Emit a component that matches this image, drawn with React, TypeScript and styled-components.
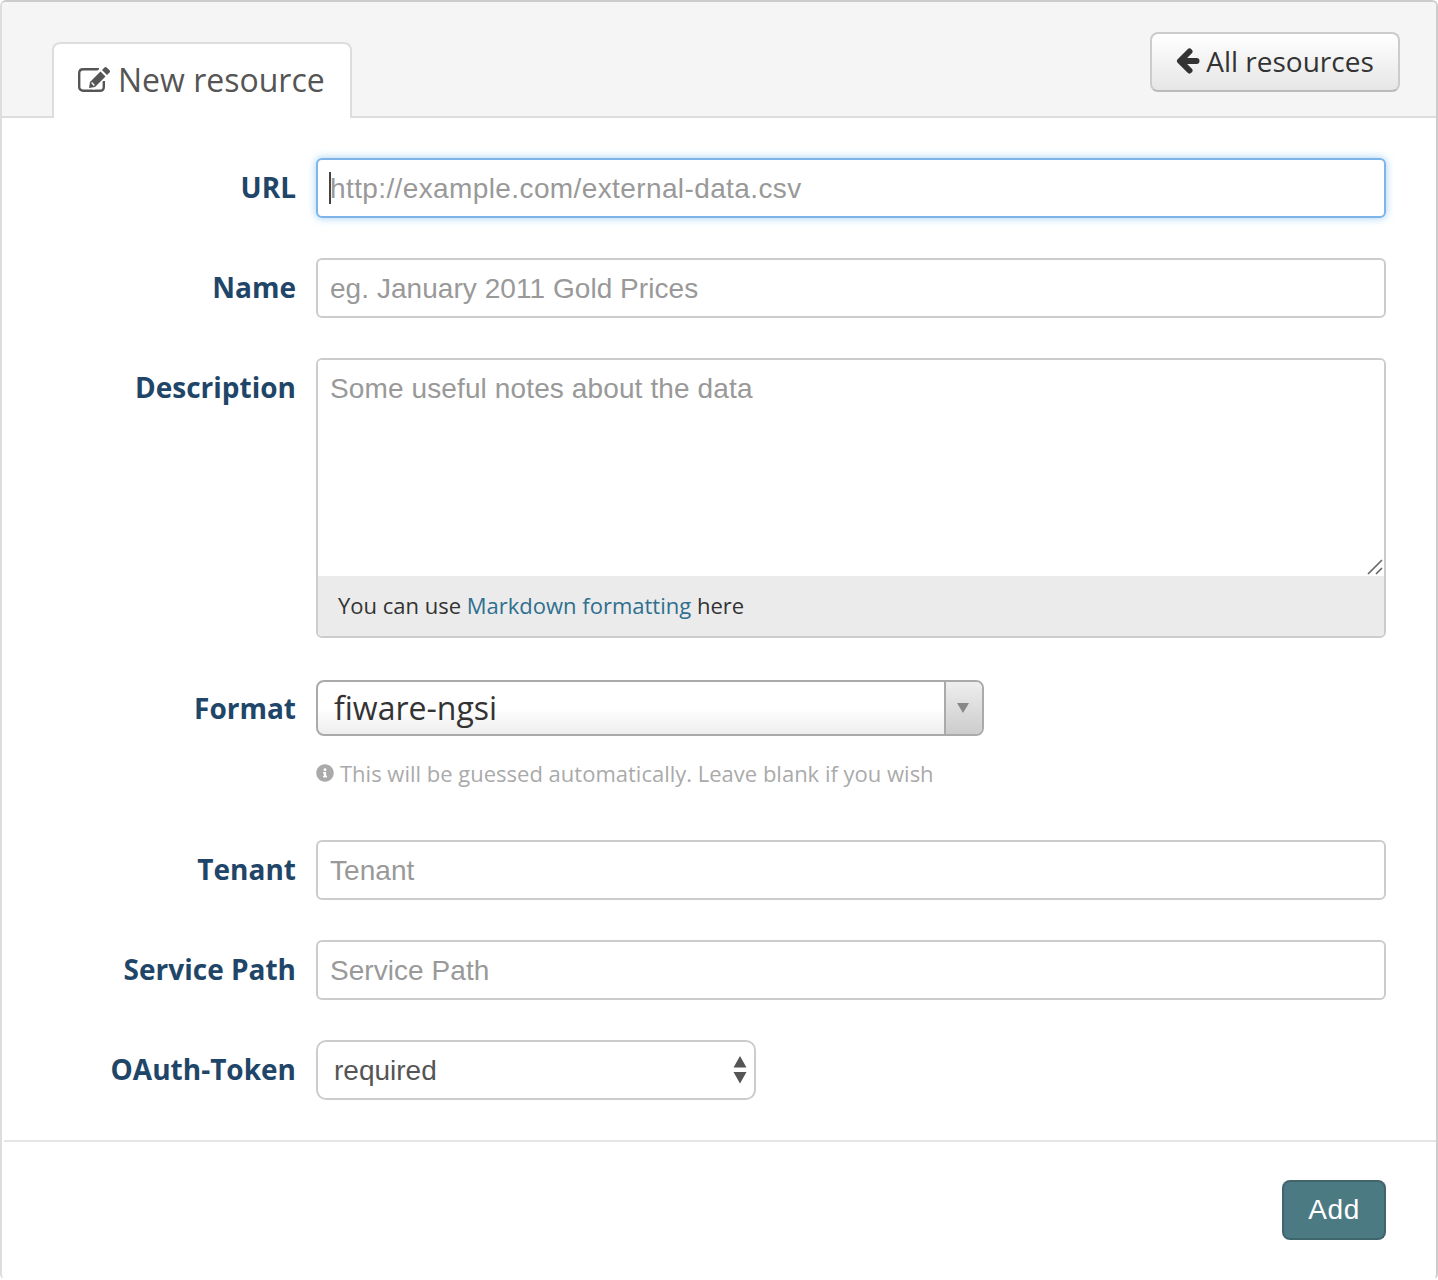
import { createGlobalStyle } from "styled-components";
import styled from "styled-components";
import { FaInfoCircle } from "react-icons/fa";

const GlobalStyle = createGlobalStyle`
  html, body {
    margin: 0;
    padding: 0;
    background: #fff;
  }
  * {
    box-sizing: border-box;
  }
`;

const EditIcon = () => (
  <svg width="32" height="26" viewBox="0 0 32 26" fill="none">
    <path
      d="M25.8 15V21C25.8 23.4 24 24.8 21.8 24.8H5.2C2.8 24.8 1.2 23.2 1.2 21V7.2C1.2 4.8 2.8 3.2 5.2 3.2H21"
      stroke="#555"
      strokeWidth="2.4"
    />
    <path d="M12 20 30 2" stroke="#fff" strokeWidth="11" />
    <path d="M12 16 22.5 5.5 27.5 10.5 17 21 11 22z" fill="#555" />
    <path d="M24 4 26.5 1.5C27.2.8 28 .8 28.7 1.5L31.5 4.3C32.2 5 32.2 5.8 31.5 6.5L29 9z" fill="#555" />
    <path d="M13.6 16.6 16.4 19.4" stroke="#fff" strokeWidth="1.4" />
  </svg>
);

const BackArrow = () => (
  <svg width="24" height="26" viewBox="0 0 24 26" fill="none">
    <path
      d="M13.5 3.5 4 13 13.5 22.5M4.5 13H20.5"
      stroke="#333"
      strokeWidth="6"
      strokeLinecap="round"
      strokeLinejoin="round"
    />
  </svg>
);

const FormField = ({ label, children }: { label: string; children: React.ReactNode }) => (
  <Row>
    <Label>{label}</Label>
    <Control>{children}</Control>
  </Row>
);

export default function App() {
  return (
    <>
      <GlobalStyle />
      <Panel>
        <Header>
          <Tab>
            <EditIcon />
            New resource
          </Tab>
          <BackButton>
            <BackArrow />
            All resources
          </BackButton>
        </Header>
        <Form>
          <FormField label="URL">
            <UrlWrap>
              <TextInput $focused placeholder="http://example.com/external-data.csv" />
              <Caret />
            </UrlWrap>
          </FormField>
          <FormField label="Name">
            <TextInput placeholder="eg. January 2011 Gold Prices" />
          </FormField>
          <FormField label="Description">
            <MarkdownBox>
              <TextArea placeholder="Some useful notes about the data" />
              <ResizeGrip width="16" height="16" viewBox="0 0 16 16">
                <path d="M1 15 15 1M9 15 15 9" stroke="#666" strokeWidth="1.6" />
              </ResizeGrip>
              <Editor>
                You can use <EditorLink href="#">Markdown formatting</EditorLink> here
              </Editor>
            </MarkdownBox>
          </FormField>
          <FormatRow>
            <FormatLabel>Format</FormatLabel>
            <Control>
              <Combo>
                <ComboValue>fiware-ngsi</ComboValue>
                <ComboArrow>
                  <svg width="12" height="10" viewBox="0 0 12 10">
                    <path d="M0 0h12L6 10z" fill="#888" />
                  </svg>
                </ComboArrow>
              </Combo>
              <Hint>
                <FaInfoCircle size={18} />
                This will be guessed automatically. Leave blank if you wish
              </Hint>
            </Control>
          </FormatRow>
          <FormField label="Tenant">
            <TextInput placeholder="Tenant" />
          </FormField>
          <FormField label="Service Path">
            <TextInput placeholder="Service Path" />
          </FormField>
          <FormField label="OAuth-Token">
            <SelectWrap>
              <Select defaultValue="required">
                <option value="required">required</option>
                <option value="optional">optional</option>
              </Select>
              <SelectArrows width="14" height="28" viewBox="0 0 14 28">
                <path d="M7 0l6.5 11.5H.5z" fill="#555" />
                <path d="M.5 16h13L7 27.5z" fill="#555" />
              </SelectArrows>
            </SelectWrap>
          </FormField>
        </Form>
        <Actions>
          <AddButton>Add</AddButton>
        </Actions>
      </Panel>
    </>
  );
}

const Panel = styled.div`
  width: 1438px;
  height: 1280px;
  border: 2px solid #ccc;
  border-left-color: #ddd;
  border-bottom-color: #fff;
  border-radius: 6px;
  background: #fff;
  overflow: hidden;
`;

const Header = styled.div`
  height: 116px;
  background: #f5f5f5;
  border-bottom: 2px solid #ddd;
  padding: 30px 36px 0 50px;
  display: flex;
  justify-content: space-between;
  align-items: flex-start;
`;

const Tab = styled.div`
  width: 300px;
  height: 76px;
  margin-top: 10px;
  margin-bottom: -2px;
  padding: 0 0 4px 24px;
  display: flex;
  align-items: center;
  gap: 8px;
  background: #fff;
  border: 2px solid #ddd;
  border-bottom: none;
  border-radius: 8px 8px 0 0;
  color: #555;
  font: 400 32px "Open Sans", sans-serif;
`;

const BackButton = styled.button`
  width: 250px;
  height: 60px;
  padding: 0 0 2px 0;
  display: flex;
  align-items: center;
  justify-content: center;
  gap: 6px;
  border: 2px solid #ccc;
  border-bottom-color: #bbb;
  border-radius: 8px;
  background: linear-gradient(#fff, #e6e6e6);
  color: #333;
  font: 400 28px "Open Sans", sans-serif;
`;

const Form = styled.div`
  padding: 40px 50px 0 0;
  display: flex;
  flex-direction: column;
  gap: 40px;
`;

const Row = styled.div`
  display: flex;
  align-items: flex-start;
  gap: 20px;
`;

const FormatRow = styled(Row)`
  margin-top: 2px;
  margin-bottom: 12px;
`;

const Label = styled.label`
  width: 294px;
  flex: none;
  padding-top: 9px;
  text-align: right;
  color: #1f4668;
  font: 700 28px/40px "Open Sans", sans-serif;
`;

const FormatLabel = styled(Label)`
  padding-top: 8px;
`;

const Control = styled.div`
  flex: 1;
  min-width: 0;
`;

const UrlWrap = styled.div`
  position: relative;
`;

const Caret = styled.span`
  position: absolute;
  left: 13px;
  top: 14px;
  width: 2px;
  height: 32px;
  background: #444;
`;

const TextInput = styled.input<{ $focused?: boolean }>`
  display: block;
  width: 100%;
  height: 60px;
  padding: 2px 12px 0;
  border: 2px solid ${(p) => (p.$focused ? "#7db4ea" : "#ccc")};
  border-radius: 6px;
  outline: none;
  box-shadow: ${(p) => (p.$focused ? "0 0 8px rgba(102, 175, 233, 0.6)" : "none")};
  background: #fff;
  color: #555;
  letter-spacing: ${(p) => (p.$focused ? "0.39px" : "0.05px")};
  font: 400 28px "Liberation Sans", sans-serif;

  &::placeholder {
    color: #999;
    opacity: 1;
  }
`;

const MarkdownBox = styled.div`
  position: relative;
  height: 280px;
  border: 2px solid #ccc;
  border-radius: 6px;
  display: flex;
  flex-direction: column;
  overflow: hidden;
`;

const TextArea = styled.textarea`
  display: block;
  width: 100%;
  height: 216px;
  flex: none;
  padding: 14px 12px;
  border: none;
  outline: none;
  resize: none;
  color: #555;
  letter-spacing: 0.12px;
  font: 400 28px/30px "Liberation Sans", sans-serif;

  &::placeholder {
    color: #999;
    opacity: 1;
  }
`;

const ResizeGrip = styled.svg`
  position: absolute;
  right: 1px;
  top: 199px;
  pointer-events: none;
`;

const Editor = styled.div`
  flex: 1;
  padding: 0 0 2px 20px;
  display: flex;
  align-items: center;
  white-space: pre;
  background: #ebebeb;
  color: #333;
  font: 400 22px "Open Sans", sans-serif;
`;

const EditorLink = styled.a`
  color: #2f6f8f;
  text-decoration: none;
`;

const Combo = styled.div`
  width: 668px;
  height: 56px;
  display: flex;
  border: 2px solid #aaa;
  border-radius: 8px;
  background: linear-gradient(#fff 50%, #eee);
  overflow: hidden;
`;

const ComboValue = styled.span`
  flex: 1;
  padding: 0 0 0 16px;
  color: #333;
  font: 400 32px/52px "Open Sans", sans-serif;
`;

const ComboArrow = styled.span`
  width: 38px;
  display: flex;
  align-items: center;
  justify-content: center;
  padding-right: 2px;
  border-left: 2px solid #aaa;
  background: linear-gradient(#eee, #ccc);
`;

const Hint = styled.p`
  margin: 22px 0 0;
  display: flex;
  align-items: center;
  gap: 6px;
  color: #aaa;
  font: 400 22px/30px "Open Sans", sans-serif;
`;

const SelectWrap = styled.div`
  position: relative;
  width: 440px;
`;

const Select = styled.select`
  display: block;
  width: 100%;
  height: 60px;
  padding: 0 16px;
  appearance: none;
  border: 2px solid #ccc;
  border-radius: 10px;
  outline: none;
  background: #fff;
  color: #555;
  font: 400 28px "Liberation Sans", sans-serif;
`;

const SelectArrows = styled.svg`
  position: absolute;
  right: 9px;
  top: 16px;
  pointer-events: none;
`;

const Actions = styled.div`
  margin: 40px 0 0 2px;
  padding: 38px 50px 0 0;
  display: flex;
  justify-content: flex-end;
  border-top: 2px solid #e5e5e5;
`;

const AddButton = styled.button`
  width: 104px;
  height: 60px;
  border: 2px solid #3f666c;
  border-top-color: #40656b;
  border-radius: 8px;
  background: #4b7a83;
  color: #fff;
  letter-spacing: 0.6px;
  font: 400 28px "Liberation Sans", sans-serif;
`;
